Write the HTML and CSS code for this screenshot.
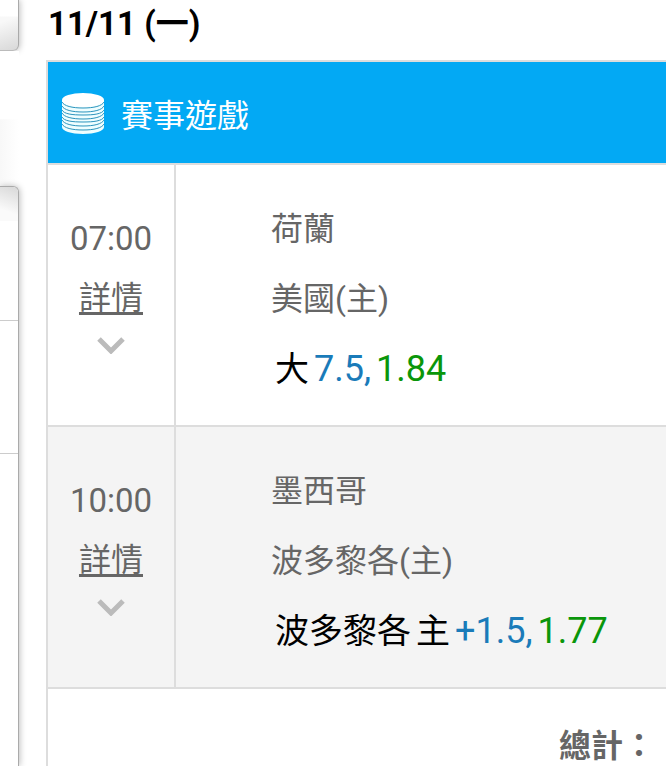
FILE: index.html
```html
<!DOCTYPE html>
<html lang="zh-Hant">
    <head>
        <meta charset="UTF-8">
        <meta name="viewport" content="width=device-width, initial-scale=1.0">
        <title>賽事遊戲</title>
        <link rel="stylesheet" href="styles.css">
    </head>
    <body>
        <div class="page">
            <aside class="sidebar">
                <div class="box box-top"></div>
                <div class="box-gap"></div>
                <div class="box box-list">
                    <div class="box-title"></div>
                    <div class="box-row"></div>
                    <div class="box-row box-row-tall"></div>
                </div>
            </aside>
            <main class="content">
                <h1>11/11 (一)</h1>
                <table class="bets">
                    <thead>
                        <tr>
                            <th colspan="2">
                                <div class="game-title">
                                    <svg class="coins" viewBox="0 0 42 42" aria-hidden="true">
                                        <path fill="#effeff" d="M0 8v27c0 4 9 7 21 7s21-3 21-7V8z"/>
                                        <g fill="none" stroke="#2c94bd" stroke-width="1">
                                            <path d="M0 10c2 4 10 6 21 6s19-2 21-6"/>
                                            <path d="M0 14c2 4 10 6 21 6s19-2 21-6"/>
                                            <path d="M0 18c2 4 10 5 21 5s19-1 21-5"/>
                                            <path d="M0 21c2 4 10 6 21 6s19-2 21-6"/>
                                            <path d="M0 25c2 4 10 5 21 5s19-1 21-5"/>
                                            <path d="M0 28c2 4 10 6 21 6s19-2 21-6"/>
                                            <path d="M0 32c2 4 10 6 21 6s19-2 21-6"/>
                                        </g>
                                        <ellipse cx="21" cy="8" rx="21" ry="7" fill="#fff"/>
                                    </svg>
                                    <span>賽事遊戲</span>
                                </div>
                            </th>
                        </tr>
                    </thead>
                    <tbody>
                        <tr>
                            <td class="time">
                                <div>07:00</div>
                                <a href="#">詳情
                                    <svg class="arrow" viewBox="0 0 28 17" aria-hidden="true"><path d="M2 2l12 12L26 2"/></svg>
                                </a>
                            </td>
                            <td class="match">
                                <div class="team">荷蘭</div>
                                <div class="team">美國(主)</div>
                                <div class="pick">
                                    <span>大</span>
                                    <span class="line">7.5,</span>
                                    <span class="odds">1.84</span>
                                </div>
                            </td>
                        </tr>
                        <tr>
                            <td class="time">
                                <div>10:00</div>
                                <a href="#">詳情
                                    <svg class="arrow" viewBox="0 0 28 17" aria-hidden="true"><path d="M2 2l12 12L26 2"/></svg>
                                </a>
                            </td>
                            <td class="match">
                                <div class="team">墨西哥</div>
                                <div class="team">波多黎各(主)</div>
                                <div class="pick">
                                    <span>波多黎各</span>
                                    <span>主</span>
                                    <span class="line">+1.5,</span>
                                    <span class="odds">1.77</span>
                                </div>
                            </td>
                        </tr>
                    </tbody>
                    <tfoot>
                        <tr>
                            <td class="total" colspan="2">總計：</td>
                        </tr>
                    </tfoot>
                </table>
            </main>
        </div>
    </body>
</html>
```

FILE: styles.css
```css
* {
    box-sizing: border-box;
}
body {
    margin: 0;
    font-family: Roboto, 'Noto Sans CJK TC', sans-serif;
    font-size: 32px;
    color: #666;
    background-color: #fff;
}
.page {
    display: flex;
    min-height: 100vh;
}
.sidebar {
    display: flex;
    flex-direction: column;
    width: 19px;
    margin-right: 27px;
}
.box {
    border-right: 1px solid #aaa;
    background-color: #fff;
    box-shadow: 1px 0 6px rgba(0, 0, 0, 0.25);
}
.box-top {
    height: 51px;
    border-bottom: 1px solid #bbb;
    border-radius: 0 0 6px 0;
    background: linear-gradient(#fff 16px, transparent 17px), linear-gradient(160deg, #f8f8f8 40%, #d8d8d8);
}
.box-gap {
    height: 135px;
    background: linear-gradient(#fff 50%, transparent 51%), linear-gradient(90deg, #f8f8f8, #fff);
}
.box-list {
    flex: 1;
    border-top: 1px solid #aaa;
    border-radius: 0 6px 0 0;
}
.box-title {
    height: 34px;
    border-radius: 0 5px 0 0;
    background: linear-gradient(20deg, #fafafa 30%, #d8d8d8);
}
.box-row {
    height: 100px;
    border-bottom: 1px solid #ccc;
}
.box-row-tall {
    height: 133px;
}
.content {
    flex: 1;
}
h1 {
    margin: 0;
    padding: 0 2px 12px;
    font-size: 33px;
    line-height: 48px;
    color: #000;
}
.bets {
    width: 100%;
    border-collapse: collapse;
}
.bets th, .bets td {
    padding: 0;
    border: 2px solid #ddd;
    border-right: none;
}
.bets th {
    height: 103px;
    padding-left: 14px;
    background-color: #03a9f4;
    color: #fff;
    font-weight: normal;
}
.game-title {
    display: flex;
    align-items: center;
    gap: 17px;
}
.coins {
    width: 42px;
    height: 42px;
}
.bets tbody tr {
    height: 262px;
}
.bets tbody tr:nth-child(even) {
    background-color: #f4f4f4;
}
.bets .time {
    width: 128px;
    padding-bottom: 28px;
    font-size: 33px;
    line-height: 60px;
    text-align: center;
}
.time a {
    display: flex;
    flex-direction: column;
    align-items: center;
    font-size: 32px;
    line-height: 58px;
    color: #666;
    text-decoration: underline;
    text-decoration-thickness: 3px;
    text-underline-offset: 3px;
}
.arrow {
    width: 28px;
    height: 17px;
    margin-top: 10px;
    fill: none;
    stroke: #bbb;
    stroke-width: 5;
}
.bets .match {
    padding: 7px 0 0 95px;
    line-height: 70px;
}
.pick {
    display: flex;
    gap: 5px;
    padding-left: 4px;
    font-size: 34px;
    color: #000;
}
.line, .odds {
    font-size: 36px;
}
.line {
    color: #1a7bb9;
}
.odds {
    color: #0a960a;
}
.bets .total {
    padding: 37px 11px 0 0;
    border-bottom: none;
    font-weight: bold;
    line-height: 40px;
    text-align: right;
}
```
